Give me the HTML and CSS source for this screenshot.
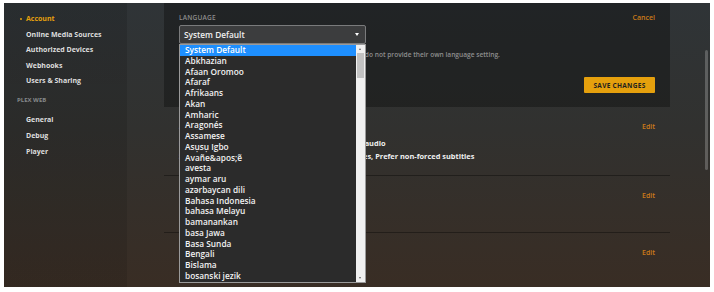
FILE: index.html
```html
<!DOCTYPE html>
<html>
<head>
<meta charset="utf-8">
<link rel="stylesheet" href="styles.css">
</head>
<body>
<div class="window">
  <aside class="sidebar">
    <ul class="nav">
      <li class="nav-item active">Account</li>
      <li class="nav-item">Online Media Sources</li>
      <li class="nav-item">Authorized Devices</li>
      <li class="nav-item">Webhooks</li>
      <li class="nav-item">Users &amp; Sharing</li>
    </ul>
    <div class="nav-heading">PLEX WEB</div>
    <ul class="nav">
      <li class="nav-item">General</li>
      <li class="nav-item">Debug</li>
      <li class="nav-item">Player</li>
    </ul>
  </aside>
  <main class="main">
    <section class="card">
      <div class="card-head">
        <span class="label">LANGUAGE</span>
        <span class="link">Cancel</span>
      </div>
      <div class="select-wrap">
        <div class="select">System Default<span class="arrow"></span></div>
        <div class="dropdown">
          <ul class="options">
            <li class="option selected">System Default</li>
            <li class="option">Abkhazian</li>
            <li class="option">Afaan Oromoo</li>
            <li class="option">Afaraf</li>
            <li class="option">Afrikaans</li>
            <li class="option">Akan</li>
            <li class="option">Amharic</li>
            <li class="option">Aragonés</li>
            <li class="option">Assamese</li>
            <li class="option">Asụsụ Igbo</li>
            <li class="option">Avañe&amp;apos;ẽ</li>
            <li class="option">avesta</li>
            <li class="option">aymar aru</li>
            <li class="option">azərbaycan dili</li>
            <li class="option">Bahasa Indonesia</li>
            <li class="option">bahasa Melayu</li>
            <li class="option">bamanankan</li>
            <li class="option">basa Jawa</li>
            <li class="option">Basa Sunda</li>
            <li class="option">Bengali</li>
            <li class="option">Bislama</li>
            <li class="option">bosanski jezik</li>
          </ul>
          <div class="scrollbar">
            <span class="sb-up"></span>
            <span class="sb-thumb"></span>
            <span class="sb-down"></span>
          </div>
        </div>
      </div>
      <p class="hint">Language for Plex Web. This will also be used by apps that do not provide their own language setting.</p>
      <div class="actions"><button class="save">SAVE CHANGES</button></div>
    </section>
    <section class="row row-first">
      <div class="row-head"><span class="label">AUDIO &amp; SUBTITLES</span><span class="link">Edit</span></div>
      <div class="value">Prefer audio track in English, Automatically select audio</div>
      <div class="value">Subtitles in English, Shown with any forced subtitles, Prefer non-forced subtitles</div>
    </section>
    <section class="row">
      <div class="row-head"><span class="label">EMAIL</span><span class="link">Edit</span></div>
    </section>
    <section class="row">
      <div class="row-head"><span class="label">PASSWORD</span><span class="link">Edit</span></div>
    </section>
  </main>
  <div class="page-scroll"><span class="page-thumb"></span></div>
</div>
</body>
</html>
```

FILE: styles.css
```css
* { box-sizing: border-box; }
html, body { margin: 0; padding: 0; background: #ffffff; }
body { padding: 3px 4px 5px 4px; font-family: "Open Sans", "Noto Sans", sans-serif; }

.window {
  position: relative;
  display: flex;
  width: 706px;
  height: 284px;
  overflow: hidden;
  background: linear-gradient(180deg, #2f3437 0%, #31312f 45%, #392d24 100%);
}

.sidebar {
  width: 123px;
  flex: none;
  background: linear-gradient(180deg, rgba(0,0,0,0.14) 0%, rgba(0,0,0,0.1) 100%);
  padding-top: 11px;
}
.nav { list-style: none; margin: 0; padding: 0; }
.nav-item {
  font-size: 7px;
  font-weight: 700;
  line-height: 10px;
  color: #dedede;
  padding-left: 22px;
  margin-bottom: 5.6px;
}
.nav-item.active { color: #e5a00d; position: relative; }
.nav-item.active::before {
  content: "";
  position: absolute;
  left: 16px;
  top: 4px;
  width: 2px;
  height: 2px;
  border-radius: 1px;
  background: #e5a00d;
}
.nav-heading {
  font-size: 6px;
  font-weight: 700;
  color: #86898a;
  line-height: 10px;
  padding-left: 13px;
  margin: 9px 0 10px;
}

.main {
  flex: 1;
  padding-left: 37px;
  padding-right: 40px;
}

.card {
  position: relative;
  background: rgba(14, 14, 14, 0.42);
  padding: 9px 15px 14px 15px;
}
.card-head, .row-head {
  display: flex;
  justify-content: space-between;
  align-items: center;
  height: 10px;
}
.label {
  font-size: 6.5px;
  font-weight: 600;
  color: #8d8d8d;
  letter-spacing: 0.2px;
}
.link {
  font-size: 7px;
  font-weight: 600;
  color: #cc7b19;
}

.select-wrap { position: relative; margin-top: 3px; width: 187px; }
.select {
  position: relative;
  height: 19px;
  background: #3c3d3e;
  border: 1px solid #7a7b7c;
  border-radius: 2px;
  color: #f0f0f0;
  font-size: 8.3px;
  font-weight: 600;
  line-height: 17px;
  padding-left: 4px;
}
.arrow {
  position: absolute;
  right: 6px;
  top: 7px;
  width: 0; height: 0;
  border-left: 2px solid transparent;
  border-right: 2px solid transparent;
  border-top: 3px solid #ffffff;
}

.dropdown {
  position: absolute;
  left: 0;
  top: 19px;
  width: 187px;
  height: 239px;
  display: flex;
  background: #2b2b2b;
  border: 1px solid #9a9a9a;
  z-index: 5;
}
.options { list-style: none; margin: 0; padding: 0; flex: 1; }
.option {
  height: 10.75px;
  line-height: 10.75px;
  font-size: 8.3px;
  font-weight: 600;
  color: #f2f2f2;
  padding-left: 5px;
  white-space: nowrap;
}
.option.selected { background: #1e8fff; color: #ffffff; }
.scrollbar {
  position: relative;
  width: 9px;
  flex: none;
  background: #f0f0f0;
}
.sb-up, .sb-down {
  position: absolute;
  left: 3px;
  width: 0; height: 0;
  border-left: 1.5px solid transparent;
  border-right: 1.5px solid transparent;
}
.sb-up { top: 3px; border-bottom: 2px solid #606060; }
.sb-down { bottom: 3px; border-top: 2px solid #606060; }
.sb-thumb {
  position: absolute;
  left: 1px;
  top: 8px;
  width: 7px;
  height: 25px;
  background: #c2c2c2;
}

.hint {
  margin: 6px 0 0;
  font-size: 6.6px;
  font-weight: 600;
  line-height: 10px;
  color: #8e8e8e;
  white-space: nowrap;
}
.actions { display: flex; justify-content: flex-end; margin-top: 17px; }
.save {
  height: 16px;
  width: 71px;
  border: 0;
  border-radius: 1px;
  background: #e5a00d;
  color: #1f1f1f;
  font-family: "Open Sans", "Noto Sans", sans-serif;
  font-size: 6.5px;
  font-weight: 700;
  letter-spacing: 0.3px;
  padding: 0;
}

.row {
  padding: 14px 15px 0 15px;
  height: 57px;
  border-top: 1px solid rgba(0,0,0,0.35);
}
.row-first { border-top: 0; height: 68px; }
.value {
  font-size: 7.4px;
  font-weight: 700;
  color: #f0f0f0;
  line-height: 10px;
  white-space: nowrap;
}
.row-head + .value { margin-top: 7px; }
.value + .value { margin-top: 3px; }

.page-scroll {
  position: absolute;
  right: 2px;
  top: 0;
  width: 3px;
  height: 100%;
}
.page-thumb {
  position: absolute;
  left: 0;
  top: 47px;
  width: 3px;
  height: 120px;
  border-radius: 2px;
  background: rgba(255,255,255,0.22);
}
```
